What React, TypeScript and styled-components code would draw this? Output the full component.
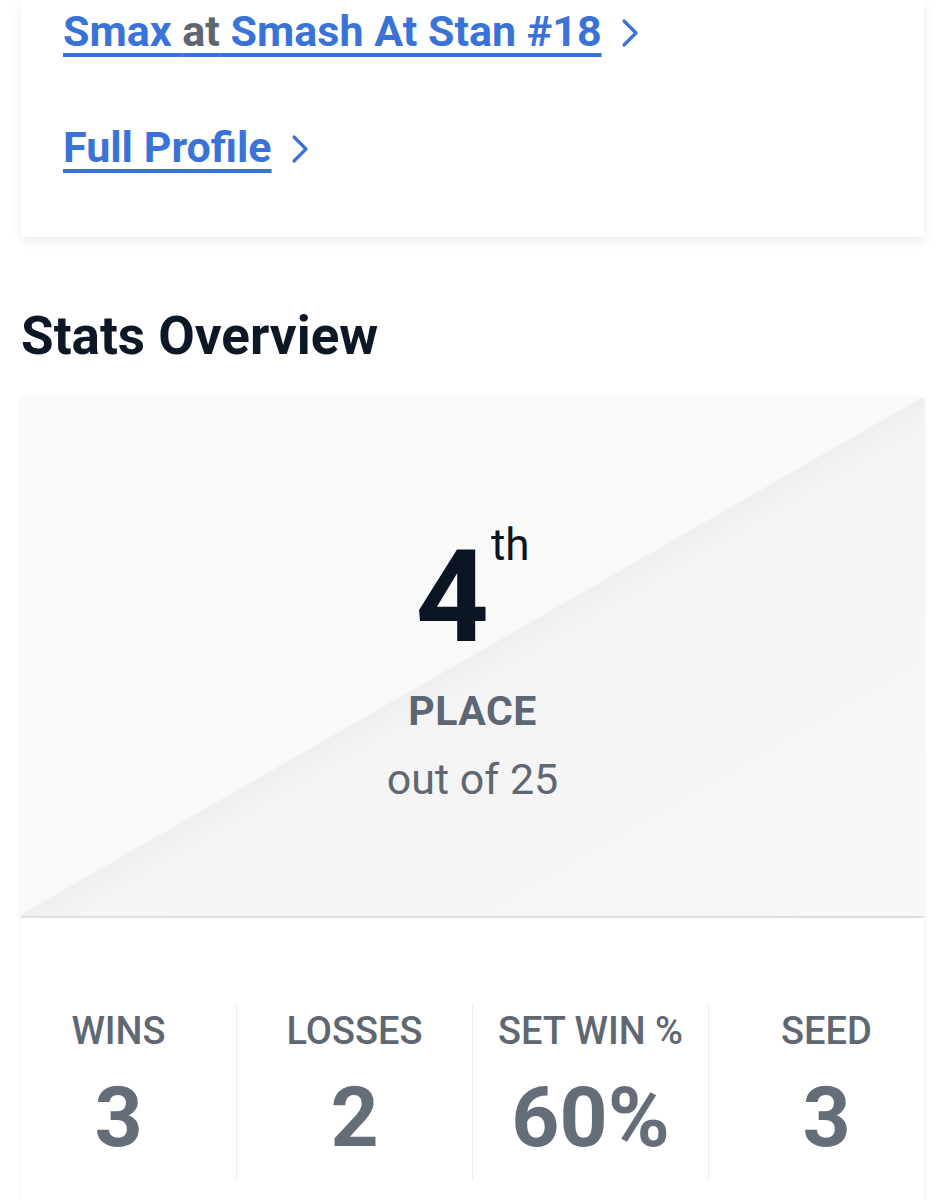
import styled, { createGlobalStyle } from "styled-components";
import { ChevronRight } from "lucide-react";

const GlobalStyle = createGlobalStyle`
  body {
    margin: 0;
    background: #fff;
    font-family: Roboto, "Liberation Sans", sans-serif;
  }
`;

const stats = [
  { label: "WINS", value: "3" },
  { label: "LOSSES", value: "2" },
  { label: "SET WIN %", value: "60%" },
  { label: "SEED", value: "3" },
];

const App = () => {
  return (
    <Page>
      <GlobalStyle />
      <LinksCard>
        <LinkRow>
          <BlueLink href="#">
            Smax <Muted>at</Muted> Smash At Stan #18
          </BlueLink>
          <Chevron size={48} strokeWidth={1.6} />
        </LinkRow>
        <LinkRow>
          <BlueLink href="#">Full Profile</BlueLink>
          <Chevron size={48} strokeWidth={1.6} />
        </LinkRow>
      </LinksCard>

      <SectionTitle>Stats Overview</SectionTitle>

      <StatsCard>
        <Hero>
          <PlaceRow>
            <PlaceNumber>4</PlaceNumber>
            <Suffix>th</Suffix>
          </PlaceRow>
          <PlaceLabel>PLACE</PlaceLabel>
          <OutOf>out of 25</OutOf>
        </Hero>
        <StatGrid>
          {stats.map((s, i) => (
            <StatCol key={s.label} $divider={i > 0}>
              <StatLabel>{s.label}</StatLabel>
              <StatValue>{s.value}</StatValue>
            </StatCol>
          ))}
        </StatGrid>
      </StatsCard>
    </Page>
  );
};

export default App;

const Page = styled.div`
  padding: 0 20px 0 21px;
`;

const LinksCard = styled.div`
  background: #fff;
  padding: 6px 42px 64px;
  display: flex;
  flex-direction: column;
  gap: 64px;
  box-shadow: 0 4px 10px rgba(0, 0, 0, 0.08);
`;

const LinkRow = styled.div`
  display: flex;
  align-items: center;
`;

const BlueLink = styled.a`
  font-size: 43px;
  line-height: 1.2;
  font-weight: 700;
  color: #3a73d8;
  text-decoration: underline;
  text-decoration-color: #3a73d8;
  text-decoration-thickness: 3.5px;
  text-underline-offset: 7px;
`;

const Muted = styled.span`
  color: #5e6670;
`;

const Chevron = styled(ChevronRight)`
  color: #3a73d8;
  margin-left: 4px;
  margin-top: 3px;
  flex-shrink: 0;
`;

const SectionTitle = styled.h2`
  margin: 68px 0 29px;
  font-size: 53px;
  line-height: 1.2;
  font-weight: 700;
  color: #0d1726;
`;

const StatsCard = styled.div`
  background: #fff;
  box-shadow: 0 1px 6px rgba(0, 0, 0, 0.07);
`;

const Hero = styled.div`
  display: flex;
  flex-direction: column;
  align-items: center;
  padding: 135px 0 110px;
  border-bottom: 2px solid #dcdfe3;
  background: linear-gradient(
    to bottom right,
    #fafafa 0%,
    #f9f9f9 49.7%,
    #efeff0 50%,
    #f4f4f5 53%,
    #f8f8f9 100%
  );
`;

const PlaceRow = styled.div`
  display: flex;
  align-items: flex-start;
  height: 128px;
`;

const PlaceNumber = styled.span`
  font-size: 128px;
  line-height: 1;
  font-weight: 700;
  color: #0b1523;
`;

const Suffix = styled.span`
  font-size: 44px;
  line-height: 1;
  font-weight: 400;
  color: #0b1523;
  margin: -10px 0 0 2px;
`;

const PlaceLabel = styled.div`
  margin-top: 26px;
  font-size: 41px;
  line-height: 1.2;
  font-weight: 700;
  letter-spacing: 0.5px;
  color: #5d6672;
`;

const OutOf = styled.div`
  margin-top: 18px;
  font-size: 43px;
  line-height: 1.2;
  font-weight: 400;
  color: #5f6773;
`;

const StatGrid = styled.div`
  display: grid;
  grid-template-columns: repeat(4, 1fr);
  margin: 0 -20px 0 -21px;
  padding: 86px 0 40px;
`;

const StatCol = styled.div<{ $divider: boolean }>`
  display: flex;
  flex-direction: column;
  align-items: center;
  padding: 5px 0 11px;
  gap: 14px;
  border-left: 1px solid ${(p) => (p.$divider ? "#ececec" : "transparent")};
`;

const StatLabel = styled.div`
  font-size: 38px;
  line-height: 1.2;
  font-weight: 500;
  color: #5f6773;
`;

const StatValue = styled.div`
  font-size: 84px;
  line-height: 1.2;
  font-weight: 700;
  color: #656d78;
`;
